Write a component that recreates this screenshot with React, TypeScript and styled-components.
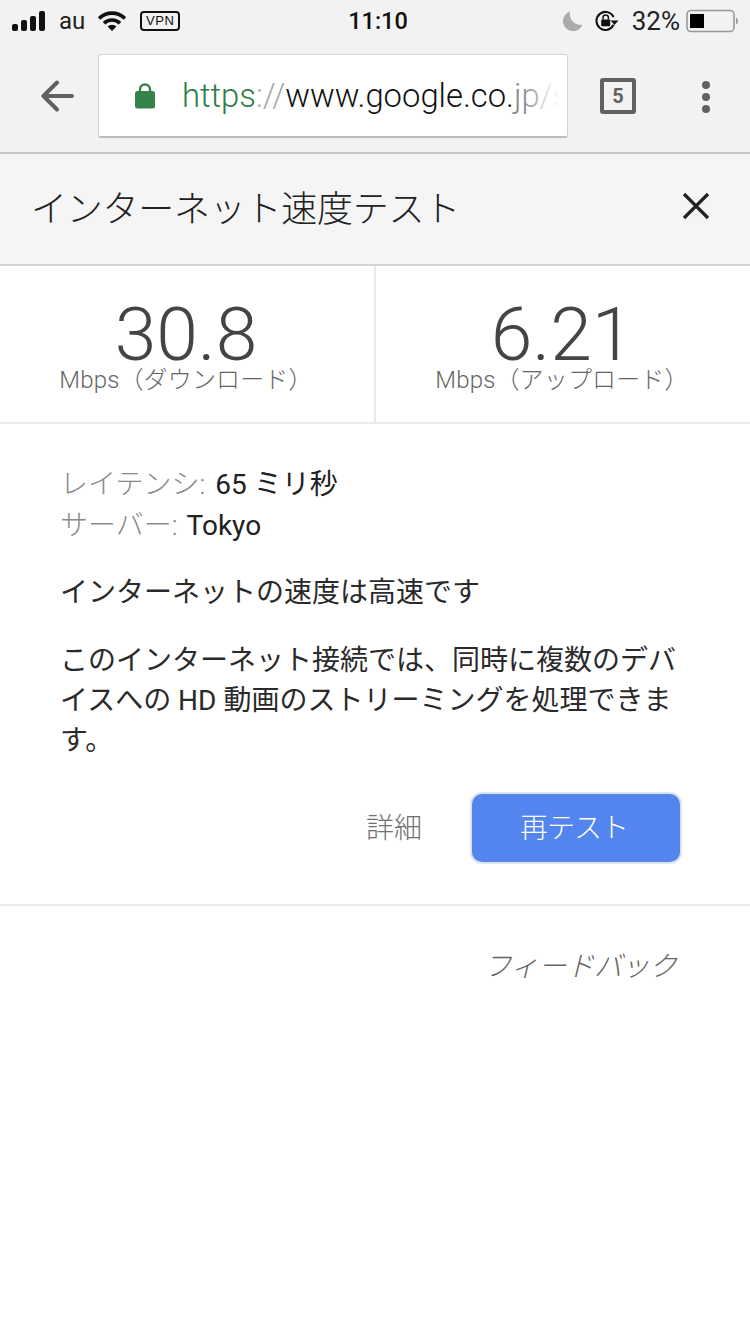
import React from "react";
import styled, { createGlobalStyle } from "styled-components";

const Global = createGlobalStyle`
  html, body { margin: 0; padding: 0; background: #fff; }
  body { font-family: Roboto, "Noto Sans CJK JP", sans-serif; }
`;

const Page = styled.div`
  width: 750px;
  height: 1334px;
  overflow: hidden;
  background: #fff;
  display: flex;
  flex-direction: column;
`;

const Chrome = styled.div`
  background: #f2f2f2;
  height: 152px;
  border-bottom: 2px solid #c4c4c4;
  display: flex;
  flex-direction: column;
`;

const StatusBar = styled.div`
  height: 41px;
  display: grid;
  grid-template-columns: 1fr auto 1fr;
  align-items: center;
  padding: 0 11px 0 12px;
  color: #111;
  font-family: "Liberation Sans", sans-serif;
`;

const StatusGroup = styled.div<{ $end?: boolean }>`
  display: flex;
  align-items: center;
  justify-content: ${(p) => (p.$end ? "flex-end" : "flex-start")};
`;

const Carrier = styled.span`
  font-family: Roboto, sans-serif;
  font-size: 24px;
  color: #222;
  margin: 0 13px 0 14px;
`;

const Clock = styled.span`
  font-family: Roboto, sans-serif;
  font-size: 23.5px;
  font-weight: 500;
  color: #111;
  margin-left: 5px;
`;

const VpnBadge = styled.span`
  box-sizing: border-box;
  width: 40px;
  height: 20px;
  margin-left: 14px;
  border: 2px solid #111;
  border-radius: 4px;
  display: flex;
  align-items: center;
  justify-content: center;
  font-family: "Liberation Sans", sans-serif;
  font-size: 13px;
  letter-spacing: 0.6px;
`;

const Battery = styled.span`
  font-family: Roboto, sans-serif;
  font-size: 26px;
  color: #222;
  margin: 0 6px 0 13px;
`;

const Toolbar = styled.div`
  flex: 1;
  display: flex;
  align-items: flex-start;
  padding-top: 13px;
`;

const BackButton = styled.div`
  width: 98px;
  height: 84px;
  display: flex;
  align-items: center;
  padding-left: 40px;
  box-sizing: border-box;
`;

const Omnibox = styled.div`
  box-sizing: border-box;
  width: 470px;
  height: 84px;
  background: #fff;
  border: 1px solid #d4d4d4;
  border-bottom: 2px solid #bcbcbc;
  border-radius: 3px;
  display: flex;
  align-items: center;
  padding-left: 36px;
  overflow: hidden;
  position: relative;
  & > svg {
    flex-shrink: 0;
  }
`;

const Url = styled.span`
  font-family: Roboto, sans-serif;
  font-size: 32.8px;
  font-weight: 300;
  margin-left: 27px;
  white-space: nowrap;
  color: #111;
`;

const Scheme = styled.span`
  color: #2c7d43;
`;

const Slashes = styled.span`
  color: #a8a8a8;
`;

const FadeTail = styled.span`
  color: #8a8a8a;
`;

const Fade = styled.div`
  position: absolute;
  right: 0;
  top: 0;
  bottom: 0;
  width: 44px;
  background: linear-gradient(to right, rgba(255, 255, 255, 0), #fff 85%);
`;

const TabCount = styled.div`
  box-sizing: border-box;
  width: 36px;
  height: 36px;
  margin: 24px 0 0 32px;
  border: 4px solid #616161;
  border-radius: 3px;
  display: flex;
  align-items: center;
  justify-content: center;
  font-family: Roboto, sans-serif;
  font-size: 20px;
  font-weight: 700;
  color: #616161;
`;

const MenuDots = styled.div`
  margin: 27px 0 0 66px;
  display: flex;
  flex-direction: column;
  gap: 4px;
`;

const Dot = styled.span`
  width: 8px;
  height: 8px;
  border-radius: 50%;
  background: #616161;
`;

const Header = styled.div`
  box-sizing: border-box;
  height: 112px;
  background: #f5f5f5;
  border-bottom: 2px solid #d4d4d4;
  display: flex;
  align-items: center;
  justify-content: space-between;
  padding: 0 40px 6px 31px;
`;

const Title = styled.h1`
  margin: 0;
  font-size: 36px;
  font-weight: 300;
  letter-spacing: -0.25px;
  color: #212121;
`;

const Stats = styled.div`
  display: grid;
  grid-template-columns: 376px 1fr;
  height: 156px;
  border-bottom: 2px solid #ebebeb;
`;

const Stat = styled.div<{ $divider?: boolean }>`
  box-sizing: border-box;
  display: flex;
  flex-direction: column;
  align-items: center;
  padding: 38px 2px 0 0;
  ${(p) => (p.$divider ? "border-right: 2px solid #ebebeb;" : "")}
`;

const Value = styled.div`
  font-family: Roboto, sans-serif;
  font-size: 75px;
  font-weight: 300;
  line-height: 60px;
  color: #444;
`;

const Unit = styled.div`
  font-size: 24px;
  font-weight: 300;
  line-height: 28px;
  margin-top: 2px;
  letter-spacing: 0.15px;
  color: #666;
`;

const Body = styled.div`
  box-sizing: border-box;
  height: 482px;
  padding: 40px 68px 0 60px;
  border-bottom: 2px solid #ebebeb;
`;

const Meta = styled.div`
  font-size: 28px;
  line-height: 41px;
  color: #212121;
  white-space: nowrap;
`;

const MetaLabel = styled.span<{ $gap: number }>`
  color: #8a8a8a;
  font-weight: 300;
  margin-right: ${(p) => p.$gap}px;
`;

const Summary = styled.p`
  margin: 26px 0 0;
  font-size: 28px;
  line-height: 41px;
  color: #2a2a2a;
`;

const Detail = styled.p`
  margin: 28px 0 0;
  font-size: 28px;
  line-height: 40px;
  color: #2a2a2a;
`;

const Actions = styled.div`
  display: flex;
  justify-content: flex-end;
  align-items: center;
  margin: 31px 0 0;
  gap: 48px;
`;

const TextButton = styled.span`
  font-size: 28px;
  font-weight: 300;
  color: #707070;
  padding-bottom: 4px;
`;

const RetestButton = styled.div`
  box-sizing: border-box;
  width: 212px;
  height: 72px;
  background: #5484ee;
  border: 2px solid #dfe3ea;
  border-radius: 12px;
  color: #fff;
  display: flex;
  align-items: center;
  justify-content: center;
  font-size: 28px;
  font-weight: 300;
  letter-spacing: -1px;
  padding: 0 4px 4px 0;
`;

const Feedback = styled.div`
  padding: 38px 73px 0 0;
  text-align: right;
  font-size: 28px;
  font-weight: 300;
  font-style: italic;
  letter-spacing: -0.3px;
  color: #666;
`;

const SignalIcon = () => (
  <svg width="33" height="20" viewBox="0 0 33 20" fill="#111">
    <rect x="0" y="13" width="6" height="7" rx="2" />
    <rect x="9" y="9" width="6" height="11" rx="2" />
    <rect x="18" y="5" width="6" height="15" rx="2" />
    <rect x="27" y="0" width="6" height="20" rx="2" />
  </svg>
);

const WifiIcon = () => (
  <svg width="28" height="20" viewBox="0 0 28 20">
    <path d="M1 7.5 A18.5 18.5 0 0 1 27 7.5" fill="none" stroke="#111" strokeWidth="3.6" />
    <path d="M6 12.3 A11.5 11.5 0 0 1 22 12.3" fill="none" stroke="#111" strokeWidth="3.6" />
    <path d="M9.6 15.6 A6 6 0 0 1 18.4 15.6 L14 20 Z" fill="#111" />
  </svg>
);

const MoonIcon = () => (
  <svg width="20" height="20" viewBox="0 0 20 20">
    <path d="M7.2 0.6 A10 10 0 1 0 19.4 13.6 A10.5 10.5 0 0 1 7.2 0.6 Z" fill="#ababab" />
  </svg>
);

const RotationLockIcon = () => (
  <svg width="24" height="22" viewBox="0 0 24 22" style={{ marginLeft: 12 }}>
    <path d="M18.6 14.8 A9 9 0 1 1 18.6 7" fill="none" stroke="#111" strokeWidth="2" />
    <path d="M15.5 10.5 L23.5 10.5 L19.5 15 Z" fill="#111" />
    <rect x="6.2" y="9.5" width="9" height="6.8" rx="1" fill="#111" />
    <path d="M8 9.5 V7.6 A2.7 2.7 0 0 1 13.4 7.6 V9.5" fill="none" stroke="#111" strokeWidth="1.5" />
  </svg>
);

const BatteryIcon = () => (
  <svg width="53" height="24" viewBox="0 0 53 24">
    <rect x="1" y="1.5" width="47" height="21" rx="4" fill="none" stroke="#999" strokeWidth="1.6" />
    <rect x="4" y="5" width="14" height="14" fill="#000" />
    <path d="M50 8.5 C52.5 9.5 52.5 14.5 50 15.5 Z" fill="#999" />
  </svg>
);

const BackIcon = () => (
  <svg width="34" height="32" viewBox="0 0 34 32">
    <path d="M32 16 H4 M17 2.5 L3.5 16 L17 29.5" fill="none" stroke="#616161" strokeWidth="4" strokeLinecap="round" strokeLinejoin="round" />
  </svg>
);

const LockIcon = () => (
  <svg width="20" height="28" viewBox="0 0 20 28">
    <path d="M5 12 V7.5 A5 5 0 0 1 15 7.5 V12" fill="none" stroke="#35824a" strokeWidth="2.4" />
    <rect x="0" y="9" width="20" height="17.5" rx="2.5" fill="#35824a" />
  </svg>
);

const CloseIcon = () => (
  <svg width="28" height="28" viewBox="0 0 28 28">
    <path d="M2 2 L26 26 M26 2 L2 26" fill="none" stroke="#212121" strokeWidth="3.2" />
  </svg>
);

export default function App() {
  return (
    <Page>
      <Global />
      <Chrome>
        <StatusBar>
          <StatusGroup>
            <SignalIcon />
            <Carrier>au</Carrier>
            <WifiIcon />
            <VpnBadge>VPN</VpnBadge>
          </StatusGroup>
          <Clock>11:10</Clock>
          <StatusGroup $end>
            <MoonIcon />
            <RotationLockIcon />
            <Battery>32%</Battery>
            <BatteryIcon />
          </StatusGroup>
        </StatusBar>
        <Toolbar>
          <BackButton>
            <BackIcon />
          </BackButton>
          <Omnibox>
            <LockIcon />
            <Url>
              <Scheme>https</Scheme>
              <Slashes>://</Slashes>www.google.co.<FadeTail>jp</FadeTail>
              <Slashes>/s</Slashes>
            </Url>
            <Fade />
          </Omnibox>
          <TabCount>5</TabCount>
          <MenuDots>
            <Dot />
            <Dot />
            <Dot />
          </MenuDots>
        </Toolbar>
      </Chrome>
      <Header>
        <Title>インターネット速度テスト</Title>
        <CloseIcon />
      </Header>
      <Stats>
        <Stat $divider>
          <Value>30.8</Value>
          <Unit>Mbps（ダウンロード）</Unit>
        </Stat>
        <Stat>
          <Value>6.21</Value>
          <Unit>Mbps（アップロード）</Unit>
        </Stat>
      </Stats>
      <Body>
        <Meta>
          <MetaLabel $gap={10}>レイテンシ:</MetaLabel>65 ミリ秒
        </Meta>
        <Meta>
          <MetaLabel $gap={9}>サーバー:</MetaLabel>Tokyo
        </Meta>
        <Summary>インターネットの速度は高速です</Summary>
        <Detail>
          このインターネット接続では、同時に複数のデバイスへの HD 動画のストリーミングを処理できます。
        </Detail>
        <Actions>
          <TextButton>詳細</TextButton>
          <RetestButton>再テスト</RetestButton>
        </Actions>
      </Body>
      <Feedback>フィードバック</Feedback>
    </Page>
  );
}
